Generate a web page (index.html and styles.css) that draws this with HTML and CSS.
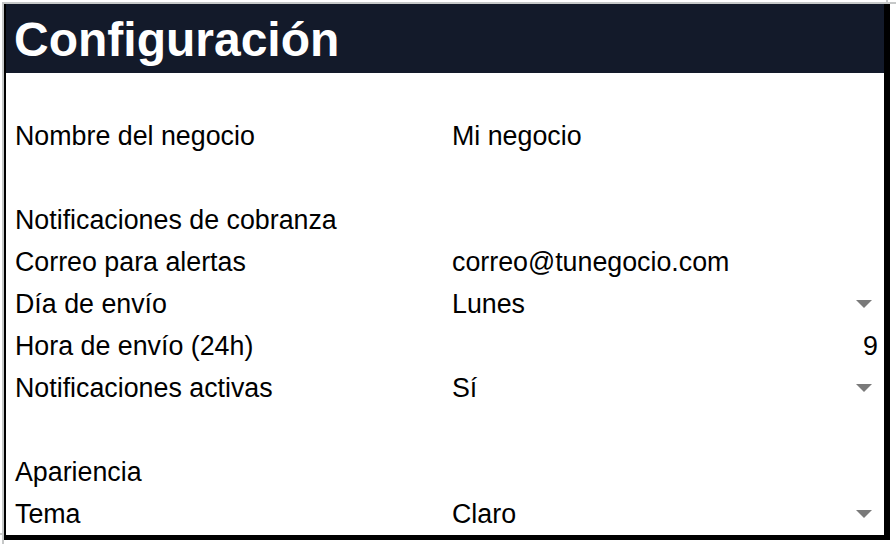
FILE: index.html
```html
<!DOCTYPE html>
<html lang="es">
<head>
<meta charset="utf-8">
<title>Configuración</title>
<link rel="stylesheet" href="styles.css">
</head>
<body>
<div class="sheet">
  <span class="tick-top"></span>
  <span class="tick-bottom"></span>
  <div class="frame">
    <div class="header">Configuración</div>
    <div class="grid">
      <div class="cell"></div><div class="cell"></div>
      <div class="cell">Nombre del negocio</div><div class="cell">Mi negocio</div>
      <div class="cell"></div><div class="cell"></div>
      <div class="cell">Notificaciones de cobranza</div><div class="cell"></div>
      <div class="cell">Correo para alertas</div><div class="cell">correo@tunegocio.com</div>
      <div class="cell">Día de envío</div><div class="cell select"><span>Lunes</span><i class="arrow"></i></div>
      <div class="cell">Hora de envío (24h)</div><div class="cell num">9</div>
      <div class="cell">Notificaciones activas</div><div class="cell select"><span>Sí</span><i class="arrow"></i></div>
      <div class="cell"></div><div class="cell"></div>
      <div class="cell">Apariencia</div><div class="cell"></div>
      <div class="cell">Tema</div><div class="cell select"><span>Claro</span><i class="arrow"></i></div>
    </div>
  </div>
</div>
</body>
</html>
```
FILE: styles.css
```css
html, body {
  margin: 0;
  padding: 0;
  background: #ffffff;
  font-family: "Liberation Sans", Arial, Helvetica, sans-serif;
  color: #000000;
}
.sheet {
  position: relative;
  margin: 2px 0 0 2px;
  border-top: 2px solid #c6c8c8;
  border-left: 2px solid #c6c8c8;
  height: 542px;
  box-sizing: border-box;
}
.tick-top {
  position: absolute;
  left: 882px;
  top: -4px;
  width: 2px;
  height: 4px;
  background: #c6c8c8;
}
.tick-bottom {
  position: absolute;
  left: -4px;
  top: 529px;
  width: 4px;
  height: 2px;
  background: #c6c8c8;
}
.frame {
  width: 886px;
  box-sizing: border-box;
  border-left: 2px solid #000;
  border-right: 6px solid #000;
  border-bottom: 5px solid #000;
}
.header {
  height: 69px;
  background: #131a2a;
  color: #ffffff;
  font-weight: bold;
  font-size: 48px;
  line-height: 71px;
  padding-left: 8px;
  box-sizing: border-box;
}
.grid {
  display: grid;
  grid-template-columns: 437px 1fr;
  grid-auto-rows: 42px;
}
.cell {
  font-size: 26.8px;
  line-height: 43px;
  padding: 0 9px;
  white-space: nowrap;
}
.select {
  display: flex;
  align-items: center;
  justify-content: space-between;
  padding-right: 12px;
}
.arrow {
  width: 0;
  height: 0;
  border-left: 8px solid transparent;
  border-right: 8px solid transparent;
  border-top: 8px solid #7a7a7a;
}
.num {
  text-align: right;
  padding-right: 6px;
}
```
